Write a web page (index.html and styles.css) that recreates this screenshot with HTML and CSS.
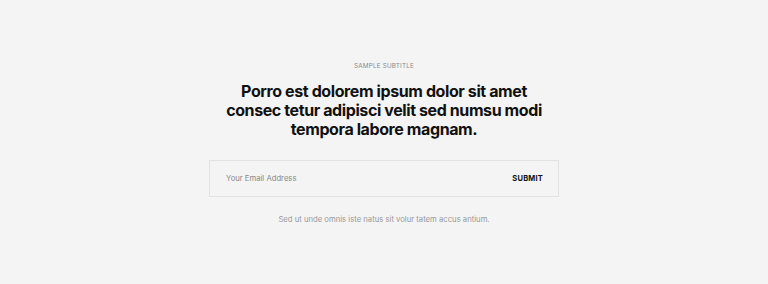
FILE: index.html
```html
<!DOCTYPE html>
<html>
<head>
  <meta charset="UTF-8">
  <title>Newsletter</title>
  <link rel="stylesheet" href="styles.css">
</head>
<body>

<section class="newsletter">
  <div class="subtitle">SAMPLE SUBTITLE</div>
  <h2 class="title">Porro est dolorem ipsum dolor sit amet consec tetur adipisci velit sed numsu modi tempora labore magnam.</h2>

  <form class="signup">
    <input type="email" class="signup-input" placeholder="Your Email Address">
    <button type="button" class="signup-btn">SUBMIT</button>
  </form>

  <p class="note">Sed ut unde omnis iste natus sit volur tatem accus antium.</p>
</section>

</body>
</html>
```

FILE: styles.css
```css
body {
  margin: 0;
  background: #f4f4f4;
  font-family: Inter, "Noto Sans", sans-serif;
}

.newsletter {
  display: flex;
  flex-direction: column;
  align-items: center;
  padding-top: 62px;
}

.subtitle {
  font-size: 6.3px;
  color: #8a8a8a;
  letter-spacing: 0.2px;
  line-height: 9px;
}

.title {
  margin: 11px 0 0;
  width: 340px;
  text-align: center;
  font-size: 16px;
  line-height: 19px;
  font-weight: 700;
  color: #111;
  letter-spacing: -0.4px;
}

.signup {
  margin-top: 21px;
  width: 350px;
  height: 37px;
  box-sizing: border-box;
  border: 1px solid #e2e2e2;
  display: flex;
  align-items: center;
  padding: 0 15px 0 16px;
}

.signup-input {
  flex: 1;
  border: 0;
  background: transparent;
  font-family: inherit;
  font-size: 7.7px;
  color: #333;
  outline: none;
  padding: 0;
}

.signup-input::placeholder {
  color: #888;
}

.signup-btn {
  border: 0;
  background: transparent;
  padding: 0;
  font-family: inherit;
  font-size: 7.5px;
  font-weight: 700;
  color: #111;
  letter-spacing: 0.2px;
}

.note {
  margin: 18px 0 0;
  font-size: 7.7px;
  color: #999;
}
```
